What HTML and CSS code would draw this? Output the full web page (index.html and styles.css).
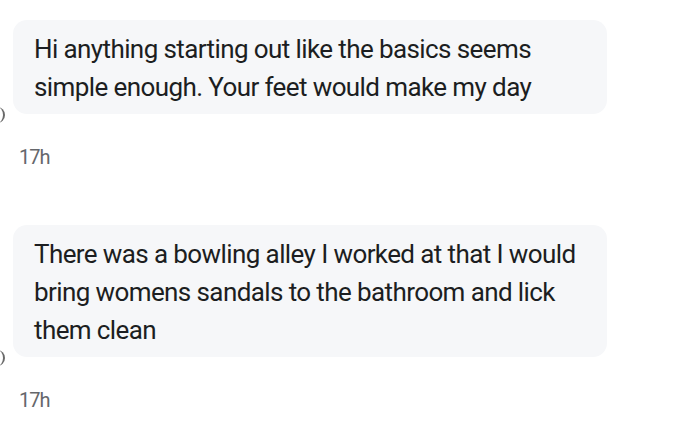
FILE: index.html
```html
<!DOCTYPE html>
<html>
<head>
<meta charset="utf-8">
<link rel="stylesheet" href="styles.css">
</head>
<body>
<div class="thread">
  <div class="msg msg-first">
    <div class="avatar-edge"></div>
    <div class="bubble">Hi anything starting out like the basics seems simple enough. Your feet would make my day</div>
    <div class="time">17h</div>
  </div>
  <div class="msg msg-second">
    <div class="avatar-edge"></div>
    <div class="bubble">There was a bowling alley I worked at that I would bring womens sandals to the bathroom and lick them clean</div>
    <div class="time">17h</div>
  </div>
</div>
</body>
</html>
```
FILE: styles.css
```css
html, body {
  margin: 0;
  padding: 0;
  background: #ffffff;
}
body {
  font-family: Roboto, "Liberation Sans", sans-serif;
  width: 680px;
  height: 445px;
  overflow: hidden;
}
.thread {
  display: flex;
  flex-direction: column;
  padding: 20px 0 0 13px;
}
.msg {
  position: relative;
  display: flex;
  flex-direction: column;
  align-items: flex-start;
}
.msg-second {
  margin-top: 56px;
}
.bubble {
  box-sizing: border-box;
  width: 594px;
  background: #f6f7f9;
  border-radius: 14px;
  padding: 10px 18px 8px 21px;
  font-size: 26px;
  line-height: 38px;
  color: #1c1e21;
  letter-spacing: -0.6px;
}
.time {
  margin: 31px 0 0 6px;
  font-size: 20px;
  line-height: 24px;
  color: #65676b;
  letter-spacing: -1px;
}
.avatar-edge {
  position: absolute;
  left: -24px;
  bottom: 46px;
  width: 14px;
  height: 16px;
  border-radius: 50%;
  border-right: 2px solid #444;
  opacity: 0.8;
}
```
